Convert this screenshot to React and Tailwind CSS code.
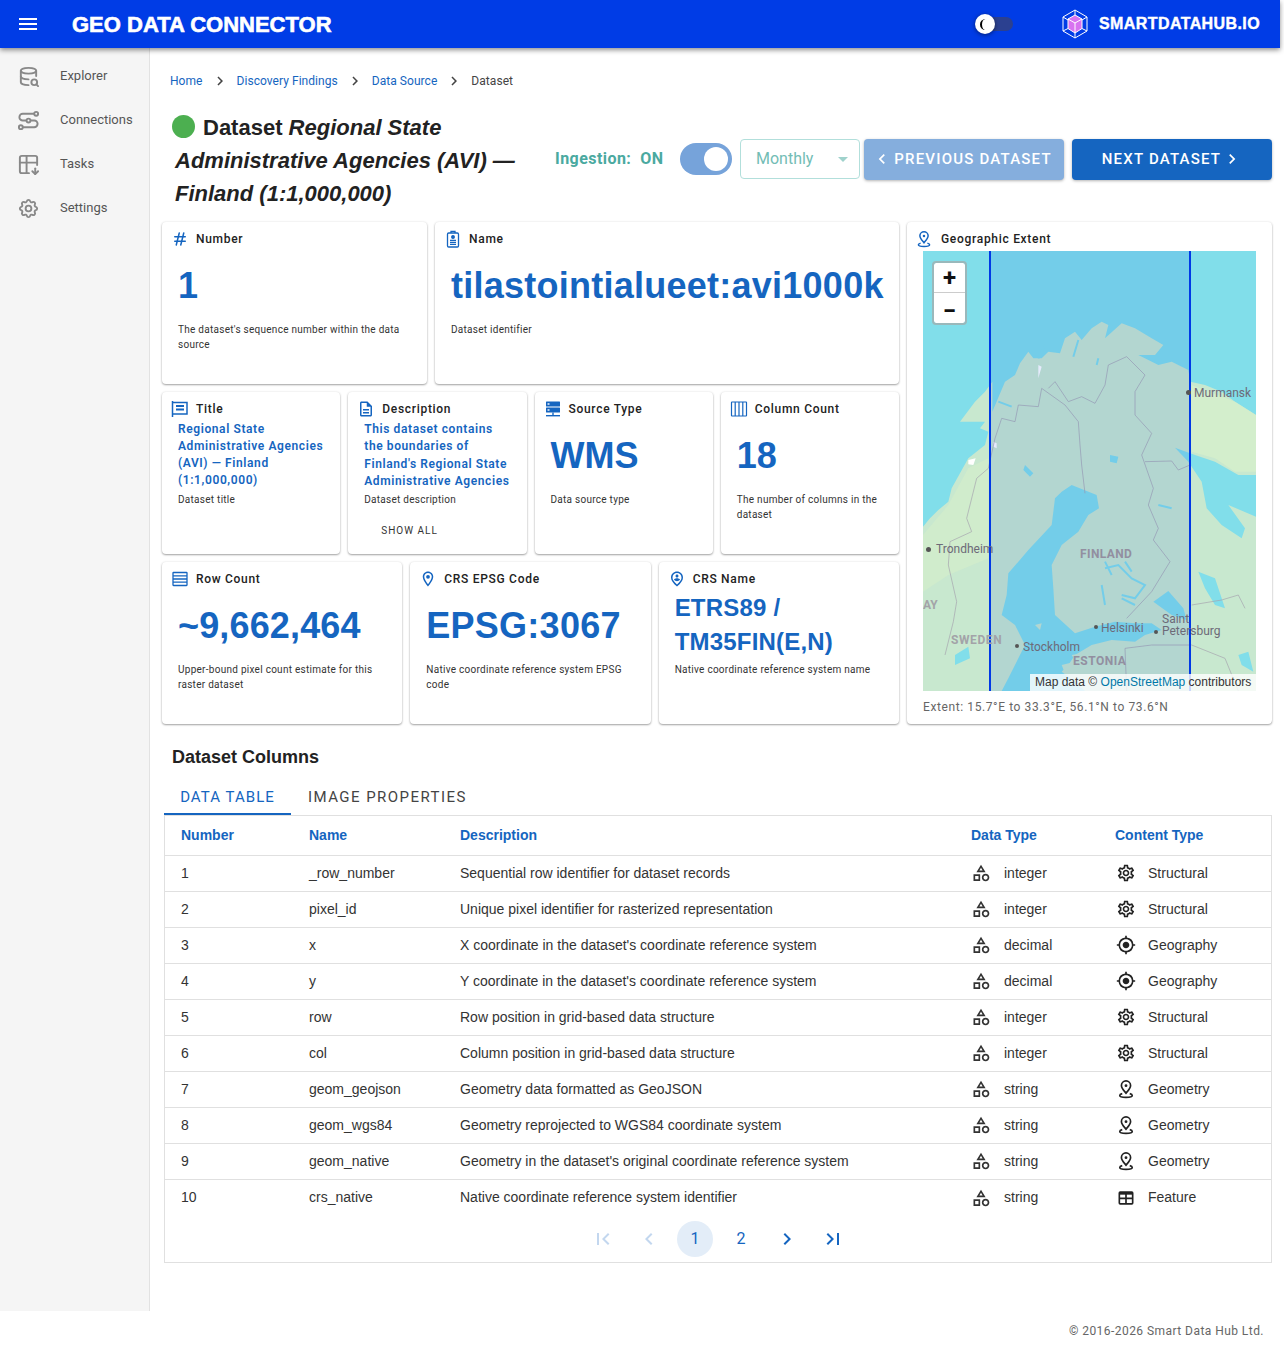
import {
  MdMenu, MdOutlineCategory, MdOutlineSettings, MdGpsFixed,
  MdOutlineDescription, MdOutlineLocationOn, MdOutlinePersonPinCircle,
  MdChevronLeft, MdChevronRight, MdFirstPage, MdLastPage, MdArrowDropDown,
} from "react-icons/md";
import { TbDatabaseSearch, TbHash, TbSettings, TbTableDown } from "react-icons/tb";

const font = { fontFamily: "Roboto, 'Liberation Sans', sans-serif" };
const arial = { fontFamily: "'Liberation Sans', Arial, sans-serif" };

const rows = [
  [1, "_row_number", "Sequential row identifier for dataset records", "integer", "Structural"],
  [2, "pixel_id", "Unique pixel identifier for rasterized representation", "integer", "Structural"],
  [3, "x", "X coordinate in the dataset's coordinate reference system", "decimal", "Geography"],
  [4, "y", "Y coordinate in the dataset's coordinate reference system", "decimal", "Geography"],
  [5, "row", "Row position in grid-based data structure", "integer", "Structural"],
  [6, "col", "Column position in grid-based data structure", "integer", "Structural"],
  [7, "geom_geojson", "Geometry data formatted as GeoJSON", "string", "Geometry"],
  [8, "geom_wgs84", "Geometry reprojected to WGS84 coordinate system", "string", "Geometry"],
  [9, "geom_native", "Geometry in the dataset's original coordinate reference system", "string", "Geometry"],
  [10, "crs_native", "Native coordinate reference system identifier", "string", "Feature"],
];

const PinBaseIcon = ({ className }) => (
  <svg viewBox="0 0 24 24" fill="none" stroke="currentColor" strokeWidth="2" className={className}>
    <path d="M12 17c-1.500-2-5.500-5.600-5.500-9.200a5.500 5.500 0 0 1 11 0C17.500 11.400 13.500 15 12 17Z" />
    <circle cx="12" cy="8" r="1.700" fill="currentColor" stroke="none" />
    <path d="M7.500 17.500C5.600 18 4.500 18.800 4.500 19.700 4.500 21 7.800 22 12 22s7.500-1 7.500-2.300c0-.9-1.100-1.700-3-2.200" />
  </svg>
);

const FeatureIcon = ({ className }) => (
  <svg viewBox="0 0 24 24" fill="none" stroke="currentColor" className={className}>
    <rect x="4" y="5" width="16" height="14" rx="1" strokeWidth="2" />
    <path d="M4 6.500h16" strokeWidth="3" />
    <path d="M12 6v13M4 12.500h16" strokeWidth="2" />
  </svg>
);

const contentIcons = {
  Structural: MdOutlineSettings,
  Geography: MdGpsFixed,
  Geometry: PinBaseIcon,
  Feature: FeatureIcon,
};

const ConnectionsIcon = ({ className }) => (
  <svg viewBox="0 0 24 24" fill="none" stroke="currentColor" strokeWidth="2" className={className}>
    <circle cx="20" cy="5" r="2" />
    <circle cx="4" cy="19" r="2" />
    <circle cx="12" cy="12" r="2" />
    <path d="M18 5H6a3.500 3.500 0 0 0 0 7h4M14 12h4a3.500 3.500 0 0 1 0 7H6" />
  </svg>
);

const TitleIcon = ({ className }) => (
  <svg viewBox="0 0 18 18" fill="none" stroke="currentColor" strokeWidth="1.500" className={className}>
    <path d="M1.500 1v16" />
    <path d="M1.500 2.500h14.500v11.500H1.500" />
    <path d="M5 6h8M5 9.500h8" strokeWidth="2" />
  </svg>
);

const ColumnsIcon = ({ className }) => (
  <svg viewBox="0 0 18 18" fill="none" stroke="currentColor" strokeWidth="1.200" className={className}>
    <rect x="1.500" y="2" width="15" height="14" rx="0.500" />
    <path d="M5.200 2v14M9 2v14M12.800 2v14" />
  </svg>
);

const RowsIcon = ({ className }) => (
  <svg viewBox="0 0 18 18" fill="none" stroke="currentColor" strokeWidth="1.300" className={className}>
    <rect x="2" y="2.500" width="14" height="13" rx="0.500" />
    <path d="M2 5.800h14M2 9h14M2 12.200h14" />
  </svg>
);

const BadgeIcon = ({ className }) => (
  <svg viewBox="0 0 18 18" fill="none" stroke="currentColor" strokeWidth="1.300" className={className}>
    <rect x="3.500" y="3" width="11" height="14" rx="1.200" />
    <path d="M7 3V1.400h4V3" />
    <circle cx="9" cy="7" r="1.300" fill="currentColor" />
    <path d="M6 10.300h6M6 12.300h6M6 14.300h6" />
  </svg>
);

const ServerIcon = ({ className }) => (
  <svg viewBox="0 0 18 18" fill="currentColor" className={className}>
    <rect x="2" y="1.500" width="14" height="5" rx="0.500" />
    <rect x="2" y="7.500" width="14" height="5" rx="0.500" />
    <rect x="3.500" y="3.300" width="2" height="1.400" fill="white" />
    <rect x="3.500" y="9.300" width="2" height="1.400" fill="white" />
    <rect x="8.300" y="12.500" width="1.400" height="2.500" />
    <rect x="2" y="15" width="14" height="1.400" />
  </svg>
);

const Card = ({ icon: Icon, label, value, valueClass, valueFont, desc, children, className }) => (
  <div className={`bg-white rounded-[4px] shadow-[0_1px_2px_rgba(0,0,0,0.35),0_0_3px_rgba(0,0,0,0.08)] h-[162px] overflow-hidden ${className}`}>
    <div className="h-[29px] pt-[5px] pl-[9px] flex items-center gap-[6px]">
      <Icon className="w-[18px] h-[18px] text-[#1565c0] shrink-0" />
      <span className="ml-[1px] text-[12px] font-medium tracking-[0.7px] text-[#222]">{label}</span>
    </div>
    <div className="px-4">
      <div className="min-h-[71px] pb-[1px] flex items-center">
        <div className={`font-bold text-[#1565c0] ${valueClass}`} style={valueFont}>{value}</div>
      </div>
      <p className="text-[10px] leading-[15px] tracking-[0.27px] text-[#333]">{desc}</p>
      {children}
    </div>
  </div>
);

const MapView = () => (
  <div className="relative h-[440px] w-[333px] overflow-hidden bg-[#81deea]">
    <svg viewBox="54 78 999 1320" className="absolute inset-0 w-full h-full">
      <path
        fill="#c8e8cf"
        d="M54 905 75 880 100 855 130 830 140 790 165 745 190 700 240 660 250 620 225 610 240 590 200 590 165 590 210 530 240 500 262 470 262 560 300 470 330 450 345 415 370 380 385 400 410 400 430 380 465 385 480 340 510 320 530 345 560 310 590 290 610 300 600 340 650 295 690 310 740 340 775 360 750 390 700 390 760 420 800 410 850 435 856 470 900 480 950 500 990 530 1053 570 1053 750 1000 750 930 710 870 690 810 668 850 710 890 770 905 850 950 900 1010 940 1020 910 970 840 1053 875 1053 1398 54 1398Z"
      />
      <path fill="#d6efca" d="M860 480 990 530 1053 570 1053 740 990 740 930 700 860 680 850 600Z" opacity="0.8" />
      <path fill="#d6efca" d="M54 930 130 840 190 730 250 700 250 1000 130 1050 54 1100Z" opacity="0.6" />
      <path
        fill="#81deea"
        d="M500 780 575 810 582 850 550 870 520 920 470 960 440 1020 445 1090 450 1170 510 1225 570 1205 630 1190 690 1195 740 1195 770 1215 720 1230 690 1250 620 1245 560 1260 510 1290 490 1320 470 1340 510 1370 540 1398 290 1398 310 1360 340 1300 360 1260 330 1200 290 1170 305 1110 310 1045 370 975 440 900 450 820 470 800Z"
      />
      <path fill="#81deea" d="M745 1130 790 1098 835 1150 845 1185 800 1170ZM880 1040 930 1060 960 1150 930 1140 900 1090ZM150 1290 190 1265 195 1300 150 1320ZM1000 1290 1030 1280 1045 1340 1010 1320ZM360 720 385 745 375 755 355 735ZM615 690 640 695 635 715 615 710Z" />
      <path fill="#c8e8cf" d="M390 1200 410 1195 405 1215ZM470 1320 510 1310 520 1340 480 1345ZM500 1290 530 1285 540 1300 510 1305Z" />
      <path fill="none" stroke="#81deea" strokeWidth="6" d="M600 1030 640 1020 680 1060 720 1080 690 1120 650 1110M600 1010 620 1050M660 1010 680 1040M590 1080 600 1140M650 1120 690 1140M760 840 800 850M280 530 320 545M420 360 400 400M520 345 505 395M580 400 575 420" />
      <path fill="#fff" d="M190 705 212 700 205 720 190 718ZM265 650 275 655 275 670 265 665ZM400 420 410 425 400 460Z" />
      <path
        fill="none"
        stroke="#a5a1ad"
        strokeWidth="2"
        d="M540 805 530 720 525 660 520 590 480 540 410 490 400 545 340 540 330 590 290 580 270 640 250 730 215 760 185 880 200 920 135 950 130 1020 155 1130 145 1190 120 1290M430 490 450 470 490 530 530 515 570 535 600 480 610 420 665 395 720 450 690 500 690 570 740 625 710 690 745 790 730 840 760 910 745 945 795 1010 740 1100 665 1180M720 710 800 708 820 735 855 720M860 1140 950 1125 1000 1110 1020 1150M665 1398 660 1270 740 1260 860 1260 960 1300 1000 1398"
      />
      <rect x="255" y="78" width="600" height="1320" fill="#003ce6" opacity="0.1" />
      <path d="M255 78V1398M855 78V1398" stroke="#0039e6" strokeWidth="6" />
    </svg>
    <div className="absolute left-[3px] top-[296px] w-[5px] h-[5px] rounded-full bg-[#555]" />
    <div className="absolute left-[13px] top-[289px] text-[12px] text-[#6d6a78]">Trondheim</div>
    <div className="absolute left-[263px] top-[139px] w-[5px] h-[5px] rounded-full bg-[#555]" />
    <div className="absolute left-[271px] top-[133px] text-[12px] text-[#6d6a78]">Murmansk</div>
    <div className="absolute left-[171px] top-[374px] w-[4px] h-[4px] rounded-full bg-[#555]" />
    <div className="absolute left-[178px] top-[368px] text-[12px] text-[#6d6a78]">Helsinki</div>
    <div className="absolute left-[231px] top-[379px] w-[4px] h-[4px] rounded-full bg-[#555]" />
    <div className="absolute left-[239px] top-[363px] text-[12px] leading-[11.500px] text-[#6d6a78]">Saint<br />Petersburg</div>
    <div className="absolute left-[92px] top-[393px] w-[4px] h-[4px] rounded-full bg-[#555]" />
    <div className="absolute left-[100px] top-[387px] text-[12px] text-[#6d6a78]">Stockholm</div>
    <div className="absolute left-[157px] top-[294px] text-[12px] font-bold tracking-[0.4px] text-[#928fa0]">FINLAND</div>
    <div className="absolute left-[28px] top-[380px] text-[12px] font-bold tracking-[0.6px] text-[#a3a3a8]">SWEDEN</div>
    <div className="absolute left-[150px] top-[401px] text-[12px] font-bold tracking-[0.5px] text-[#928fa0]">ESTONIA</div>
    <div className="absolute left-0 top-[345px] text-[12px] font-bold text-[#a3a3a8]">AY</div>
    <div className="absolute left-[11px] top-[12px] w-[31px] h-[60px] bg-white rounded-[2px] outline-2 outline-[#9ab8bb] flex flex-col">
      <div className="h-[30px] flex items-center justify-center text-[24px] font-bold text-[#111] border-b border-[#ccc]">+</div>
      <div className="flex-1 flex items-center justify-center text-[24px] font-bold text-[#111]">−</div>
    </div>
    <div className="absolute right-0 bottom-0 h-[17px] w-[226px] bg-white/80 text-[12px] leading-[17px] pl-[5px] text-[#333] whitespace-nowrap" style={arial}>
      Map data © <span className="text-[#0078a8]">OpenStreetMap</span> contributors
    </div>
  </div>
);

const Logo = () => (
  <svg viewBox="0 0 26 30" className="w-[26px] h-[30px]" fill="none" stroke="white" strokeWidth="1">
    <path d="M13 1 25 8V22L13 29 1 22V8Z" />
    <path d="M13 1V6M1 8l5 3M25 8l-5 3M13 29v-5M1 22l5-2.500M25 22l-5-2.500" />
    <path d="M13 6 20 10V19.500L13 24 6 19.500V10Z" fill="#d873f0" />
    <path d="M6 10 13 14 20 10M13 14V24" />
  </svg>
);

const App = () => {
  return (
    <div className="w-[1284px] min-h-[1351px] bg-white text-[#333]" style={font}>
      <header className="w-[1280px] h-12 bg-[#003ce6] shadow-[0_2px_5px_rgba(0,0,0,0.45)] relative z-10 flex items-center text-white" style={arial}>
        <MdMenu className="ml-4 w-6 h-6 shrink-0" />
        <h1 className="ml-8 text-[22px] font-bold [-webkit-text-stroke:0.6px_white]">GEO DATA CONNECTOR</h1>
        <div className="ml-auto relative w-[38px] h-[14px] mr-[49px] rounded-full">
          <div className="absolute right-0 top-0 w-[27px] h-[14px] rounded-full bg-[#2b4090]" />
          <div className="absolute left-0 top-[-3px] w-[20px] h-[20px] rounded-full bg-white shadow-[0_1px_4px_rgba(0,0,0,0.5)] flex items-center justify-center">
            <div className="w-[8px] h-[11px] rounded-l-full border-l-2 border-black mr-[2px]" />
          </div>
        </div>
        <Logo />
        <span className="ml-[11px] mr-5 text-[16px] tracking-[0.4px] font-bold [-webkit-text-stroke:0.4px_white]">SMARTDATAHUB.IO</span>
      </header>

      <div className="w-[1280px] flex">
        <aside className="w-[150px] h-[1263px] shrink-0 bg-[#f5f5f5] border-r border-[#e2e2e2] pt-[6px] text-[#555]">
          {[
            [TbDatabaseSearch, "Explorer"],
            [ConnectionsIcon, "Connections"],
            [TbTableDown, "Tasks"],
            [TbSettings, "Settings"],
          ].map(([Icon, label]) => (
            <div key={label} className="h-11 flex items-center pl-[17px] gap-[20px]">
              <Icon className="w-[23px] h-[23px] text-[#888]" />
              <span className="text-[13px]">{label}</span>
            </div>
          ))}
        </aside>

        <main className="flex-1 pl-3 pr-2 min-w-0">
          <nav className="h-[66px] pl-2 flex items-center text-[12px] tracking-[0.05px]">
            <span className="text-[#1565c0]">Home</span>
            <MdChevronRight className="w-[18px] h-[18px] mx-[8px] text-[#444]" />
            <span className="text-[#1565c0]">Discovery Findings</span>
            <MdChevronRight className="w-[18px] h-[18px] mx-[8px] text-[#444]" />
            <span className="text-[#1565c0]">Data Source</span>
            <MdChevronRight className="w-[18px] h-[18px] mx-[8px] text-[#444]" />
            <span className="text-[#444]">Dataset</span>
          </nav>

          <div className="h-[108px] pb-[18px] flex items-center">
            <h2 className="w-[393px] shrink-0 pl-[13px] pr-[20px] pt-[2px] text-[22px] leading-[33px] font-bold text-[#222]" style={arial}>
              <span className="inline-block align-[-3px] w-[23px] h-[23px] -ml-[3px] rounded-full bg-[#4caf50] mr-2" />
              Dataset <i>Regional State </i><i>Administrative Agencies (AVI) — Finland (1:1,000,000)</i>
            </h2>
            <span className="w-[125px] text-[16px] font-bold tracking-[0.45px] text-[#4aa9a0] whitespace-pre">Ingestion:  ON</span>
            <div className="relative w-[52px] h-[32px] rounded-full bg-[#76a3da] shrink-0">
              <div className="absolute right-[4px] top-[4px] w-[24px] h-[24px] rounded-full bg-white" />
            </div>
            <div className="ml-2 w-[120px] h-10 rounded-[4px] border border-[#b2dfdb] flex items-center justify-between pl-[15px] pr-[4px] text-[16px] text-[#73bdb5]">
              Monthly
              <MdArrowDropDown className="w-6 h-6 text-[#9fd2cc]" />
            </div>
            <button className="ml-1 w-[200px] h-[41px] rounded-[4px] bg-[#85aedd] text-white text-[15px] font-medium tracking-[1.2px] flex items-center justify-center shadow-[0_1px_3px_rgba(0,0,0,0.3)]">
              <MdChevronLeft className="w-5 h-5 mr-[2px] -ml-[4px]" /> PREVIOUS DATASET
            </button>
            <button className="ml-2 w-[200px] h-[41px] rounded-[4px] bg-[#1565c0] text-white text-[15px] font-medium tracking-[1.2px] flex items-center justify-center shadow-[0_1px_3px_rgba(0,0,0,0.3)]">
              NEXT DATASET <MdChevronRight className="w-5 h-5 ml-[1px]" />
            </button>
          </div>

          <div className="flex gap-2">
            <div className="w-[737px] flex flex-col gap-2">
              <div className="flex gap-2">
                <Card className="w-[265px]" icon={TbHash} label="Number" value="1" valueFont={arial} valueClass="text-[36px] leading-[42px]" desc="The dataset's sequence number within the data source" />
                <Card className="flex-1" icon={BadgeIcon} label="Name" value="tilastointialueet:avi1000k" valueFont={arial} valueClass="text-[36px] leading-[42px] tracking-[0.25px] whitespace-nowrap" desc="Dataset identifier" />
              </div>
              <div className="grid grid-cols-4 gap-2">
                <Card
                  icon={TitleIcon}
                  label="Title"
                  value="Regional State Administrative Agencies (AVI) — Finland (1:1,000,000)"
                  valueClass="-mt-[2px] text-[12px] leading-[17px] tracking-[0.6px] !font-semibold"
                  desc="Dataset title"
                />
                <Card
                  icon={MdOutlineDescription}
                  label="Description"
                  value="This dataset contains the boundaries of Finland's Regional State Administrative Agencies"
                  valueClass="-mt-[1px] text-[12px] leading-[17.500px] tracking-[0.6px] !font-semibold"
                  desc="Dataset description"
                >
                  <div className="mt-[16px] ml-[17px] text-[10px] tracking-[1px] text-[#333]">SHOW ALL</div>
                </Card>
                <Card icon={ServerIcon} label="Source Type" value="WMS" valueFont={arial} valueClass="text-[36px] leading-[42px]" desc="Data source type" />
                <Card icon={ColumnsIcon} label="Column Count" value="18" valueFont={arial} valueClass="text-[36px] leading-[42px]" desc="The number of columns in the dataset" />
              </div>
              <div className="grid grid-cols-3 gap-2">
                <Card icon={RowsIcon} label="Row Count" value="~9,662,464" valueFont={arial} valueClass="text-[36px] leading-[42px] tracking-[0.15px]" desc="Upper-bound pixel count estimate for this raster dataset" />
                <Card icon={MdOutlineLocationOn} label="CRS EPSG Code" value="EPSG:3067" valueFont={arial} valueClass="text-[36px] leading-[42px] tracking-[0.25px]" desc="Native coordinate reference system EPSG code" />
                <Card icon={MdOutlinePersonPinCircle} label="CRS Name" value="ETRS89 / TM35FIN(E,N)" valueFont={arial} valueClass="-mt-[2px] text-[24px] leading-[34px] tracking-[0.2px]" desc="Native coordinate reference system name" />
              </div>
            </div>

            <div className="flex-1 h-[502px] bg-white rounded-[4px] shadow-[0_1px_2px_rgba(0,0,0,0.35),0_0_3px_rgba(0,0,0,0.08)]">
              <div className="h-[29px] pt-[5px] pl-[8px] flex items-center gap-[8px]">
                <PinBaseIcon className="w-[18px] h-[18px] text-[#1565c0]" />
                <span className="text-[12px] font-medium tracking-[0.7px] text-[#222]">Geographic Extent</span>
              </div>
              <div className="px-4">
                <MapView />
                <p className="mt-2 text-[12px] leading-4 tracking-[0.6px] text-[#666]">Extent: 15.7°E to 33.3°E, 56.1°N to 73.6°N</p>
              </div>
            </div>
          </div>

          <h3 className="mt-[21px] pl-[10px] text-[18px] leading-6 font-bold text-[#222]" style={arial}>Dataset Columns</h3>

          <div className="mt-[10px] ml-[2px] flex h-[36px] items-center text-[15px]">
            <div className="w-[127px] h-[36px] pt-[3px] flex items-center justify-center tracking-[1.05px] text-[#1565c0] border-b-2 border-[#1565c0]">DATA TABLE</div>
            <div className="pl-[17px] pt-[1px] tracking-[1.45px] text-[#444]">IMAGE PROPERTIES</div>
          </div>

          <div className="ml-[2px] border border-[#e0e0e0] h-[448px]">
            <table className="w-full table-fixed text-[14px]" style={arial}>
              <colgroup>
                <col className="w-[128px]" />
                <col className="w-[151px]" />
                <col className="w-[511px]" />
                <col className="w-[144px]" />
                <col />
              </colgroup>
              <thead>
                <tr className="h-[39px] border-b border-[#e0e0e0] text-left text-[#1565c0]">
                  <th className="pl-4 font-bold">Number</th>
                  <th className="pl-[16px] font-bold">Name</th>
                  <th className="pl-[16px] font-bold">Description</th>
                  <th className="pl-[16px] font-bold">Data Type</th>
                  <th className="pl-[16px] font-bold">Content Type</th>
                </tr>
              </thead>
              <tbody>
                {rows.map(([num, name, desc, type, content]) => {
                  const ContentIcon = contentIcons[content];
                  return (
                    <tr key={num} className="h-9 border-b border-[#e0e0e0] last:border-b-0 last:h-[37px]">
                      <td className="pl-4">{num}</td>
                      <td className="pl-[16px]">{name}</td>
                      <td className="pl-[16px]">{desc}</td>
                      <td className="pl-4">
                        <div className="flex items-center gap-[13px]">
                          <MdOutlineCategory className="w-5 h-5 text-[#333]" />
                          {type}
                        </div>
                      </td>
                      <td className="pl-[17px]">
                        <div className="flex items-center gap-[12px]">
                          <ContentIcon className="w-5 h-5 text-[#222]" />
                          {content}
                        </div>
                      </td>
                    </tr>
                  );
                })}
              </tbody>
            </table>
            <div className="mt-[5px] flex items-center justify-center gap-[10px] text-[16px] text-[#1565c0]">
              <div className="w-9 h-9 flex items-center justify-center opacity-25"><MdFirstPage className="w-6 h-6" /></div>
              <div className="w-9 h-9 flex items-center justify-center opacity-25"><MdChevronLeft className="w-6 h-6" /></div>
              <div className="w-9 h-9 flex items-center justify-center rounded-full bg-[#e3edf8]">1</div>
              <div className="w-9 h-9 flex items-center justify-center">2</div>
              <div className="w-9 h-9 flex items-center justify-center"><MdChevronRight className="w-6 h-6" /></div>
              <div className="w-9 h-9 flex items-center justify-center"><MdLastPage className="w-6 h-6" /></div>
            </div>
          </div>
        </main>
      </div>

      <footer className="w-[1280px] h-10 flex items-center justify-end pr-4 text-[12px] tracking-[0.45px] text-[#666]">
        © 2016-2026 Smart Data Hub Ltd.
      </footer>
    </div>
  );
};

export default App;
